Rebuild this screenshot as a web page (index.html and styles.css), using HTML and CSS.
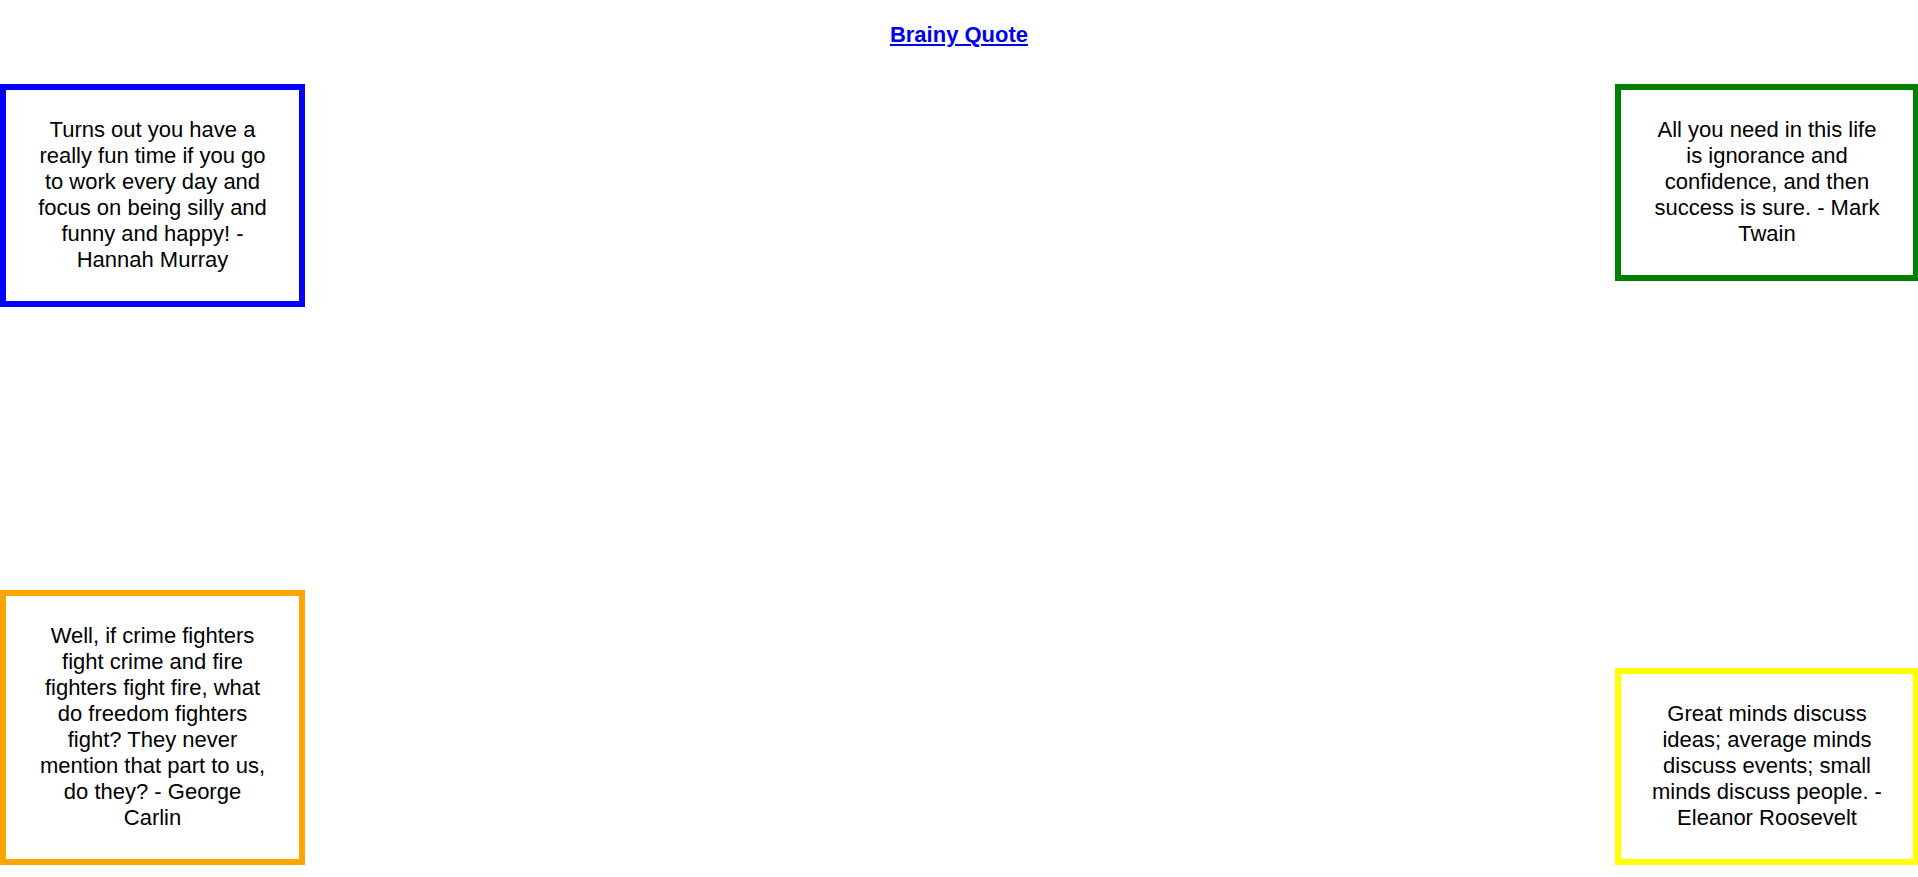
FILE: index.html
```html
<!DOCTYPE html>
<html lang="en">
<head>
<meta charset="utf-8">
<title>Brainy Quote</title>
<link rel="stylesheet" href="styles.css">
</head>
<body>
  <header class="site-header">
    <a class="site-title" href="#">Brainy Quote</a>
  </header>
  <div class="row row-top">
    <div class="quote quote-blue">Turns out you have a really fun time if you go to work every day and focus on being silly and funny and happy! - Hannah Murray</div>
    <div class="quote quote-right quote-green">All you need in this life is ignorance and confidence, and then success is sure. - Mark Twain</div>
  </div>
  <div class="row row-bottom">
    <div class="quote quote-orange">Well, if crime fighters fight crime and fire fighters fight fire, what do freedom fighters fight? They never mention that part to us, do they? - George Carlin</div>
    <div class="quote quote-right quote-yellow">Great minds discuss ideas; average minds discuss events; small minds discuss people. - Eleanor Roosevelt</div>
  </div>
</body>
</html>
```

FILE: styles.css
```css
html, body {
  margin: 0;
  padding: 0;
}

body {
  height: 100vh;
  overflow: hidden;
  display: flex;
  flex-direction: column;
  box-sizing: border-box;
  padding-bottom: 12px;
  background: #ffffff;
  font-family: "Liberation Sans", Arial, sans-serif;
  color: #000000;
}

.site-header {
  padding-top: 22px;
  text-align: center;
  font-size: 22px;
  line-height: 25px;
}

.site-title {
  font-weight: bold;
  color: #0000ee;
  text-decoration: underline;
}

.row {
  display: flex;
  justify-content: space-between;
}

.row-top {
  margin-top: 37px;
  align-items: flex-start;
}

.row-bottom {
  margin-top: auto;
  align-items: flex-end;
}

.quote {
  box-sizing: border-box;
  width: 305px;
  padding: 27px 30px 28px;
  border: 6px solid;
  font-size: 22px;
  line-height: 26px;
  text-align: center;
}

.quote-right {
  width: 304px;
  margin-right: -1px;
}

.quote-blue { border-color: #0000ff; }
.quote-green { border-color: #008000; }
.quote-orange { border-color: #ffa500; }
.quote-yellow { border-color: #ffff00; }
```
